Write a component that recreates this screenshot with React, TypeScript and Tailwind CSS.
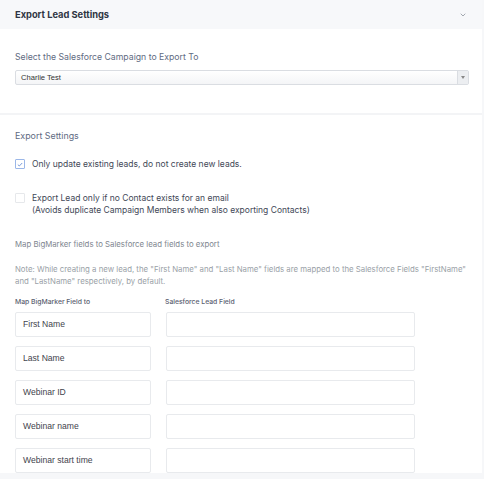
import { ChevronDown } from "lucide-react";

const fields = ["First Name", "Last Name", "Webinar ID", "Webinar name", "Webinar start time"];

export default function App() {
  return (
    <div className="h-[479px] w-[484px] overflow-hidden bg-[#f6f7f9] font-['Inter',sans-serif]">
      <div className="w-[482px] bg-white">
        <div className="flex h-[29px] items-center justify-between bg-[#f7f8fa] pl-[15px] pr-[15px]">
          <h1 className="text-[9.3px] font-bold text-[#2f3543]">Export Lead Settings</h1>
          <ChevronDown size={8} strokeWidth={2} className="text-[#777e8a]" />
        </div>

        <div className="px-[15px] pt-[22px] pb-[28px]">
          <p className="text-[8.7px] leading-[12px] text-[#5f6b82]">Select the Salesforce Campaign to Export To</p>
          <div className="mt-[7px] flex h-[15px] w-[454px] items-center rounded-[2px] border border-[#dadde2] bg-gradient-to-b from-white to-[#f4f5f7]">
            <span className="flex-1 pl-[5px] font-['Liberation_Sans',sans-serif] text-[7.6px] text-[#333]">Charlie Test</span>
            <div className="flex h-full w-[11px] items-center justify-center border-l border-[#dadde2] bg-[#eceef1]">
              <div className="h-0 w-0 border-x-[2px] border-t-[3px] border-x-transparent border-t-[#888]" />
            </div>
          </div>
        </div>

        <div className="h-[2px] bg-[#f3f4f6]" />

        <div className="px-[15px] pt-[15px]">
          <p className="text-[8.9px] leading-[12px] text-[#5f6b82]">Export Settings</p>

          <div className="mt-[16px] flex items-start gap-[7px]">
            <div className="mt-[1px] flex h-[10px] w-[10px] items-center justify-center rounded-[1px] border border-[#9bb7e8] bg-white">
              <svg width="6" height="5" viewBox="0 0 6 5" fill="none">
                <path d="M0.8 2.6 L2.3 4 L5.2 1" stroke="#6b8fd6" strokeWidth="0.9" />
              </svg>
            </div>
            <span className="text-[8.5px] leading-[12px] text-[#424857]">Only update existing leads, do not create new leads.</span>
          </div>

          <div className="mt-[22px] flex items-start gap-[7px]">
            <div className="mt-[1px] h-[10px] w-[10px] rounded-[1px] border border-[#e6e8eb] bg-white" />
            <span className="text-[8.5px] leading-[12px] text-[#424857]">
              Export Lead only if no Contact exists for an email
              <br />
              (Avoids duplicate Campaign Members when also exporting Contacts)
            </span>
          </div>

          <p className="mt-[22px] text-[7.8px] leading-[12px] text-[#80868f]">Map BigMarker fields to Salesforce lead fields to export</p>
          <p className="mt-[13px] text-[7.8px] leading-[12px] text-[#9a9fa7]">
            Note: While creating a new lead, the "First Name" and "Last Name" fields are mapped to the Salesforce Fields "FirstName"
            and "LastName" respectively, by default.
          </p>

          <div className="mt-[10px] flex gap-[15px] text-[6.8px] leading-[10px] font-medium text-[#5a6070]">
            <span className="w-[135px]">Map BigMarker Field to</span>
            <span>Salesforce Lead Field</span>
          </div>

          <div className="mt-[5px] flex flex-col gap-[9px]">
            {fields.map((f) => (
              <div key={f} className="flex gap-[15px]">
                <div className="flex h-[25px] w-[136px] items-center rounded-[2px] border border-[#e8eaed] pl-[7px] font-['Liberation_Sans',sans-serif] text-[8.6px] text-[#3f444d]">
                  {f}
                </div>
                <div className="h-[25px] w-[249px] rounded-[2px] border border-[#e8eaed]" />
              </div>
            ))}
          </div>
        </div>
      </div>
    </div>
  );
}
